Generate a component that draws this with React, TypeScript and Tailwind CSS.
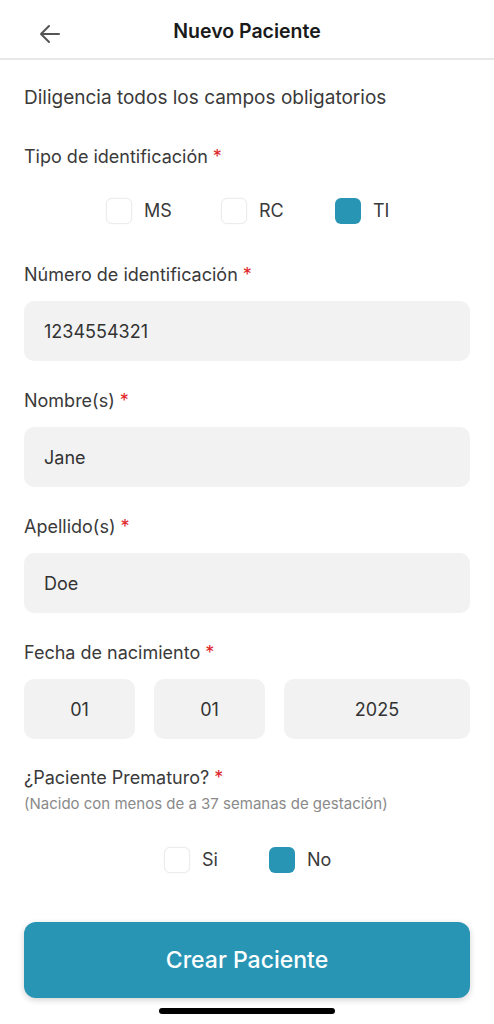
import React from "react";

function Req() {
  return <span className="text-[#e0242a] ml-[5px]">*</span>;
}

function Box({ checked, label, w }: { checked?: boolean; label: string; w: string }) {
  return (
    <div className={"flex items-center " + w}>
      <div
        className={
          checked
            ? "w-[26px] h-[26px] rounded-[6px] bg-[#2895b5]"
            : "w-[26px] h-[26px] rounded-[6px] border border-[#ececec] bg-white shadow-[0_0_2px_rgba(0,0,0,0.06)]"
        }
      />
      <span className="text-[18px] text-[#3a3a3a] ml-[12px]">{label}</span>
    </div>
  );
}

function Field({ value }: { value: string }) {
  return (
    <div className="h-[60px] rounded-[10px] bg-[#f2f2f2] flex items-center px-[20px] text-[18px] text-[#333]">
      {value}
    </div>
  );
}

export default function App() {
  return (
    <div
      className="w-[494px] h-[1024px] bg-white relative overflow-hidden"
      style={{ fontFamily: "Inter, 'Noto Sans', sans-serif" }}
    >
      <div className="h-[60px] border-b-2 border-[#e8e8e8] flex items-center relative">
        <svg
          className="absolute left-[38px] top-[24px]"
          width="24"
          height="20"
          viewBox="0 0 24 20"
          fill="none"
          stroke="#555"
          strokeWidth="2"
          strokeLinecap="round"
          strokeLinejoin="round"
        >
          <path d="M21 10H3M11 2L3 10L11 18" />
        </svg>
        <div className="w-full text-center text-[19.5px] font-semibold text-[#1a1a1a] mt-[6px]">
          Nuevo Paciente
        </div>
      </div>

      <div className="px-[24px]">
        <div className="mt-[26px] text-[19px] text-[#3a3a3a] leading-[24px]">
          Diligencia todos los campos obligatorios
        </div>
        <div className="mt-[35px] text-[18px] text-[#3a3a3a] leading-[24px]">
          Tipo de identificación
          <Req />
        </div>
        <div className="mt-[28px] flex pl-[82px]">
          <Box label="MS" w="w-[115px]" />
          <Box label="RC" w="w-[114px]" />
          <Box checked label="TI" w="w-[80px]" />
        </div>

        <div className="mt-[39px] text-[18px] text-[#3a3a3a] leading-[24px]">
          Número de identificación
          <Req />
        </div>
        <div className="mt-[14px]">
          <Field value="1234554321" />
        </div>

        <div className="mt-[28px] text-[18px] text-[#3a3a3a] leading-[24px]">
          Nombre(s)
          <Req />
        </div>
        <div className="mt-[14px]">
          <Field value="Jane" />
        </div>

        <div className="mt-[28px] text-[18px] text-[#3a3a3a] leading-[24px]">
          Apellido(s)
          <Req />
        </div>
        <div className="mt-[14px]">
          <Field value="Doe" />
        </div>

        <div className="mt-[28px] text-[18px] text-[#3a3a3a] leading-[24px]">
          Fecha de nacimiento
          <Req />
        </div>
        <div className="mt-[14px] flex gap-[19px]">
          <div className="w-[111px] h-[60px] rounded-[10px] bg-[#f2f2f2] flex items-center justify-center text-[18px] text-[#333]">
            01
          </div>
          <div className="w-[111px] h-[60px] rounded-[10px] bg-[#f2f2f2] flex items-center justify-center text-[18px] text-[#333]">
            01
          </div>
          <div className="flex-1 h-[60px] rounded-[10px] bg-[#f2f2f2] flex items-center justify-center text-[18px] text-[#333]">
            2025
          </div>
        </div>

        <div className="mt-[27px] text-[18px] text-[#3a3a3a] leading-[24px]">
          ¿Paciente Prematuro?
          <Req />
        </div>
        <div className="mt-[5px] text-[15px] text-[#8a8a8a] leading-[18px]">
          (Nacido con menos de a 37 semanas de gestación)
        </div>
        <div className="mt-[33px] flex pl-[140px]">
          <Box label="Si" w="w-[105px]" />
          <Box checked label="No" w="w-[80px]" />
        </div>

        <div className="mt-[49px] h-[76px] rounded-[12px] bg-[#2895b5] shadow-[0_2px_6px_rgba(0,0,0,0.18)] flex items-center justify-center text-white text-[23px] font-medium">
          Crear Paciente
        </div>
      </div>

      <div className="absolute left-[159px] bottom-[10px] w-[176px] h-[6px] rounded-full bg-black" />
    </div>
  );
}
